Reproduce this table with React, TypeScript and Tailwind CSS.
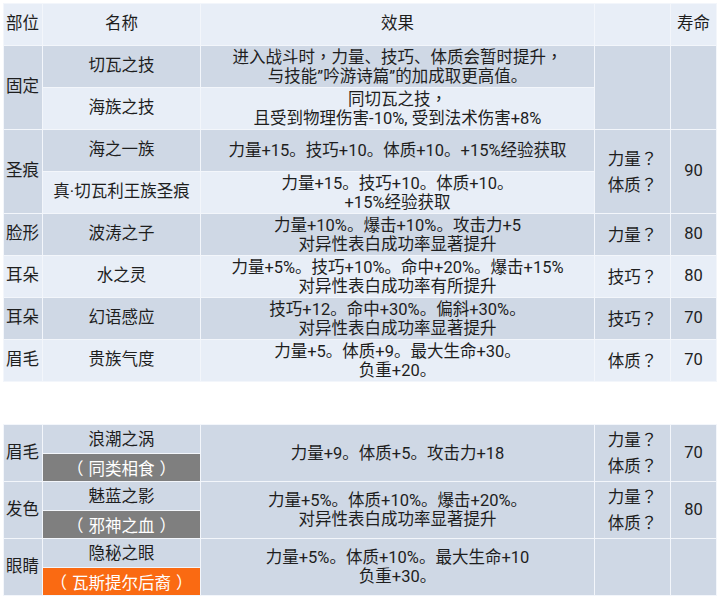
import React from "react";

const DARK = "bg-[#cfd8e5]";
const LIGHT = "bg-[#e8eef7]";
const cell = "border border-[#f3f6fb] p-0 text-center align-middle";

function P({ text }: { text: string }) {
  const parts = text.split(/([？，（）])/);
  return (
    <>
      {parts.map((p, i) => {
        if (!/^[？，（）]$/.test(p)) return <React.Fragment key={i}>{p}</React.Fragment>;
        const extra = p === "（" ? "mr-[5px] -ml-[4px]" : p === "）" ? "ml-[5px] -mr-[4px]" : "";
        return (
          <span
            key={i}
            className={extra}
            style={{ fontFamily: "'Noto Sans CJK TC', sans-serif" }}
          >
            {p}
          </span>
        );
      })}
    </>
  );
}

function Lines({ lines, lh = "leading-[19px]" }: { lines: string[]; lh?: string }) {
  return (
    <div className={lh}>
      {lines.map((l, i) => (
        <div key={i} className="whitespace-pre">
          <P text={l} />
        </div>
      ))}
    </div>
  );
}

function Cols() {
  return (
    <colgroup>
      <col className="w-[39px]" />
      <col className="w-[158px]" />
      <col className="w-[394px]" />
      <col className="w-[76px]" />
      <col className="w-[46px]" />
    </colgroup>
  );
}

type R = {
  part?: string;
  partSpan?: number;
  name: string;
  effect: string[];
  attr?: string[] | null;
  life?: string;
  sideSpan?: number;
  bg: string;
  partBg?: string;
  sideBg?: string;
  skipSide?: boolean;
  skipPart?: boolean;
};

const rows1: R[] = [
  {
    part: "固定",
    partSpan: 2,
    name: "切瓦之技",
    effect: ["进入战斗时，力量、技巧、体质会暂时提升，", "与技能”吟游诗篇”的加成取更高值。"],
    attr: [],
    life: "",
    sideSpan: 2,
    bg: DARK,
    partBg: DARK,
    sideBg: DARK,
  },
  {
    name: "海族之技",
    effect: ["同切瓦之技，", "且受到物理伤害-10%, 受到法术伤害+8%"],
    bg: LIGHT,
    skipSide: true,
    skipPart: true,
  },
  {
    part: "圣痕",
    partSpan: 2,
    name: "海之一族",
    effect: ["力量+15。技巧+10。体质+10。+15%经验获取"],
    attr: ["力量？", "体质？"],
    life: "90",
    sideSpan: 2,
    bg: DARK,
    partBg: DARK,
    sideBg: DARK,
  },
  {
    name: "真·切瓦利王族圣痕",
    effect: ["力量+15。技巧+10。体质+10。", "+15%经验获取"],
    bg: LIGHT,
    skipSide: true,
    skipPart: true,
  },
  {
    part: "脸形",
    name: "波涛之子",
    effect: ["力量+10%。爆击+10%。攻击力+5", "对异性表白成功率显著提升"],
    attr: ["力量？"],
    life: "80",
    bg: DARK,
  },
  {
    part: "耳朵",
    name: "水之灵",
    effect: ["力量+5%。技巧+10%。命中+20%。爆击+15%", "对异性表白成功率有所提升"],
    attr: ["技巧？"],
    life: "80",
    bg: LIGHT,
  },
  {
    part: "耳朵",
    name: "幻语感应",
    effect: ["技巧+12。命中+30%。偏斜+30%。", "对异性表白成功率显著提升"],
    attr: ["技巧？"],
    life: "70",
    bg: DARK,
  },
  {
    part: "眉毛",
    name: "贵族气度",
    effect: ["力量+5。体质+9。最大生命+30。", "负重+20。"],
    attr: ["体质？"],
    life: "70",
    bg: LIGHT,
  },
];

const rows2 = [
  {
    part: "眉毛",
    name: "浪潮之涡",
    tag: "（同类相食）",
    tagBg: "bg-[#7f7f7f]",
    effect: ["力量+9。体质+5。攻击力+18"],
    attr: ["力量？", "体质？"],
    life: "70",
  },
  {
    part: "发色",
    name: "魅蓝之影",
    tag: "（邪神之血）",
    tagBg: "bg-[#7f7f7f]",
    effect: ["力量+5%。体质+10%。爆击+20%。", "对异性表白成功率显著提升"],
    attr: ["力量？", "体质？"],
    life: "80",
  },
  {
    part: "眼睛",
    name: "隐秘之眼",
    tag: "（瓦斯提尔后裔）",
    tagBg: "bg-[#fa6a12]",
    effect: ["力量+5%。体质+10%。最大生命+10", "负重+30。"],
    attr: [],
    life: "",
  },
];

export default function App() {
  return (
    <div
      className="w-[720px] h-[598px] bg-white pt-[3px] pl-[3px] text-[16.5px] text-[#1e1e1e]"
      style={{ fontFamily: "Roboto, 'Noto Sans CJK SC', sans-serif" }}
    >
      <table className="table-fixed w-[713px]">
        <Cols />
        <tbody>
          <tr className={`h-[42px] ${LIGHT}`}>
            <td className={`${cell} text-left pl-[2px]`}>部位</td>
            <td className={cell}>名称</td>
            <td className={cell}>效果</td>
            <td className={cell}></td>
            <td className={cell}>寿命</td>
          </tr>
          {rows1.map((r, i) => (
            <tr key={i} className="h-[42px]">
              {!r.skipPart && (
                <td
                  rowSpan={r.partSpan}
                  className={`${cell} ${r.partBg ?? r.bg} text-left pl-[2px]`}
                >
                  {r.part}
                </td>
              )}
              <td className={`${cell} ${r.bg}`}>{r.name}</td>
              <td className={`${cell} ${r.bg}`}>
                <Lines lines={r.effect} />
              </td>
              {!r.skipSide && (
                <>
                  <td rowSpan={r.sideSpan} className={`${cell} ${r.sideBg ?? r.bg}`}>
                    <Lines lines={r.attr ?? []} lh="leading-[24px]" />
                  </td>
                  <td rowSpan={r.sideSpan} className={`${cell} ${r.sideBg ?? r.bg}`}>
                    {r.life}
                  </td>
                </>
              )}
            </tr>
          ))}
        </tbody>
      </table>

      <div className="h-[42px]" />

      <table className="table-fixed w-[713px]">
        <Cols />
        <tbody>
          {rows2.map((r, i) => (
            <React.Fragment key={i}>
              <tr className="h-[29px]">
                <td rowSpan={2} className={`${cell} ${DARK} text-left pl-[2px]`}>
                  {r.part}
                </td>
                <td className={`${cell} ${DARK} leading-[20px] pt-[2px]`}>{r.name}</td>
                <td rowSpan={2} className={`${cell} ${DARK}`}>
                  <Lines lines={r.effect} />
                </td>
                <td rowSpan={2} className={`${cell} ${DARK}`}>
                  <Lines lines={r.attr} lh="leading-[24px]" />
                </td>
                <td rowSpan={2} className={`${cell} ${DARK}`}>
                  {r.life}
                </td>
              </tr>
              <tr className="h-[28px]">
                <td className={`${cell} ${r.tagBg} text-white leading-[20px] pt-[2px]`}>
                  <P text={r.tag} />
                </td>
              </tr>
            </React.Fragment>
          ))}
        </tbody>
      </table>
    </div>
  );
}
